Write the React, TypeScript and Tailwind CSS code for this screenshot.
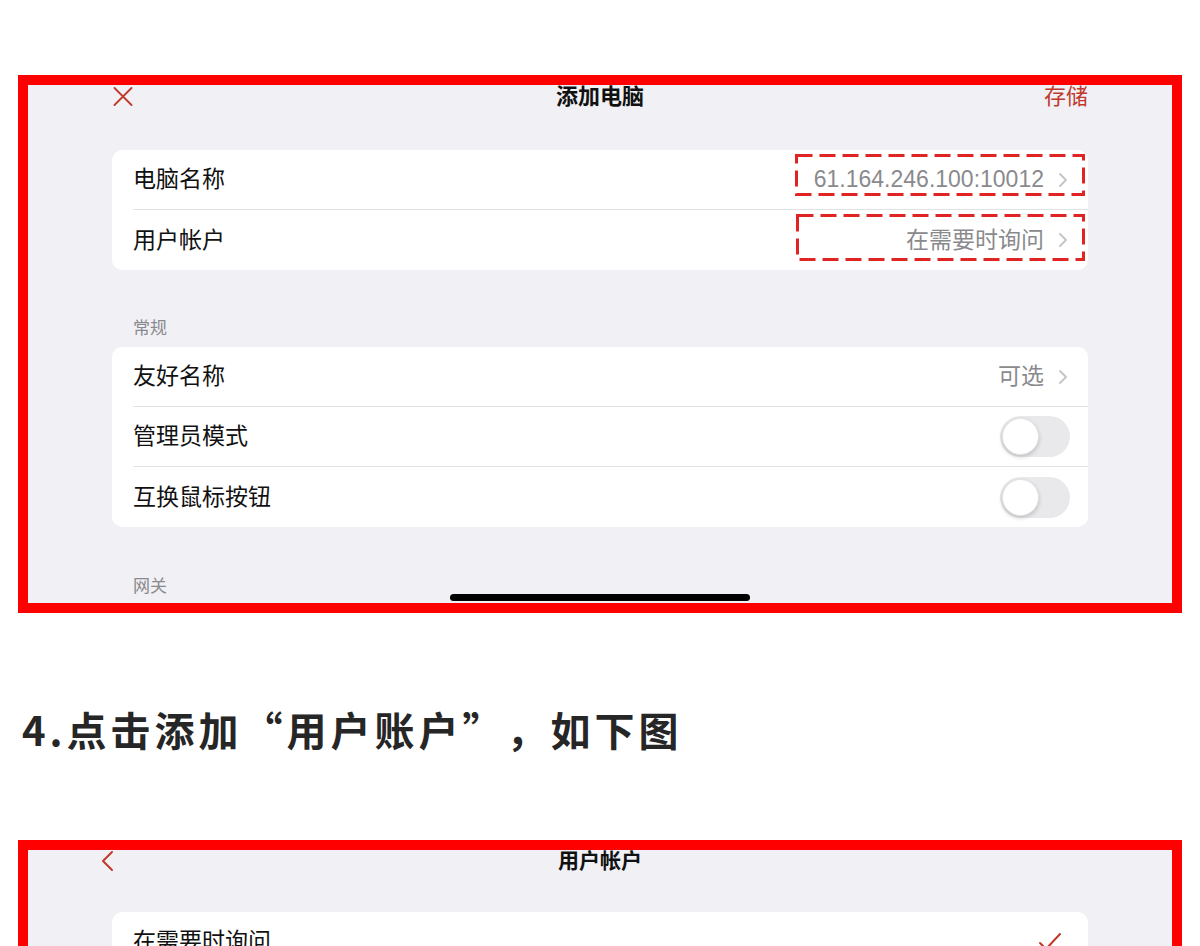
import React from 'react';

const RED = '#c0392b';

const Chevron = () => (
    <svg width="10" height="16" viewBox="0 0 10 16" className="shrink-0">
        <path d="M2 2 L8 8 L2 14" fill="none" stroke="#c4c4c8" strokeWidth="1.8" strokeLinecap="round" strokeLinejoin="round" />
    </svg>
);

const Toggle = () => (
    <div className="w-[70px] h-[41px] rounded-full bg-[#e9e9eb] p-[2px] flex items-center">
        <div className="w-[37px] h-[37px] rounded-full bg-white border border-[#e2e2e4] shadow-[0_2px_4px_rgba(0,0,0,0.18)]" />
    </div>
);

const DashedBox: React.FC<{ className: string; w: number; h: number }> = ({ className, w, h }) => (
    <svg width={w} height={h} className={`absolute pointer-events-none ${className}`}>
        <rect x="1.5" y="1.5" width={w - 3} height={h - 3} fill="none" stroke="#e02424" strokeWidth="3" strokeDasharray="16 7" />
    </svg>
);

interface RowProps {
    label: string;
    value?: string;
    chevron?: boolean;
    toggle?: boolean;
    last?: boolean;
    check?: boolean;
}

const Row: React.FC<RowProps> = ({ label, value, chevron, toggle, last, check }) => (
    <div className="h-[60px] pl-[21px] flex">
        <div className={`flex-1 flex items-center justify-between ${toggle ? 'pr-[18px]' : 'pr-[20px]'} ${last ? '' : 'border-b border-[#e3e3e6]'}`}>
            <span className="text-[23px] text-[#111]">{label}</span>
            {(value || chevron) && (
                <div className="flex items-center gap-[14px]">
                    {value && <span className="text-[23px] text-[#8a8a8e]">{value}</span>}
                    {chevron && <Chevron />}
                </div>
            )}
            {toggle && <Toggle />}
            {check && (
                <svg width="24" height="20" viewBox="0 0 24 20" className="mr-[6px]">
                    <path d="M2 11 L8 17 L22 2" fill="none" stroke={RED} strokeWidth="2" strokeLinecap="round" strokeLinejoin="round" />
                </svg>
            )}
        </div>
    </div>
);

export default function App() {
    return (
        <div className="w-[1200px] min-h-[946px] bg-white overflow-hidden font-['Liberation_Sans','Noto_Sans_CJK_SC',sans-serif]">
            <div className="h-[75px]" />

            {/* 添加电脑 screenshot */}
            <div className="mx-[18px] h-[538px] border-[10px] border-[#ff0000] bg-[#f0f0f5] relative overflow-hidden">
                <div className="h-[22px] px-[84px] flex items-center justify-between relative">
                    <svg width="20" height="19" viewBox="0 0 20 19" className="ml-[1px]">
                        <path d="M1.5 1 L18.5 18 M18.5 1 L1.5 18" stroke={RED} strokeWidth="1.8" strokeLinecap="round" />
                    </svg>
                    <span className="absolute left-0 right-0 text-center text-[22px] font-bold text-[#111]">添加电脑</span>
                    <span className="text-[22px] text-[#c0392b]">存储</span>
                </div>

                <div className="mx-[84px] mt-[43px] bg-white rounded-[10px] relative">
                    <Row label="电脑名称" value="61.164.246.100:10012" chevron />
                    <Row label="用户帐户" value="在需要时询问" chevron last />
                    <DashedBox className="left-[683px] top-[4px]" w={290} h={42} />
                    <DashedBox className="left-[684px] top-[64px]" w={289} h={47} />
                </div>

                <div className="mx-[84px] pl-[21px] mt-[49px] mb-[8px] text-[17px] leading-[20px] text-[#8a8a8e]">常规</div>
                <div className="mx-[84px] bg-white rounded-[10px]">
                    <Row label="友好名称" value="可选" chevron />
                    <Row label="管理员模式" toggle />
                    <Row label="互换鼠标按钮" toggle last />
                </div>

                <div className="mx-[84px] pl-[21px] mt-[50px] text-[17px] leading-[20px] text-[#8a8a8e]">网关</div>

                <div className="absolute left-[422px] bottom-[2px] w-[300px] h-[7px] rounded-full bg-black" />
            </div>

            <h2 className="mt-[92px] pl-[22px] h-[48px] flex items-center text-[40px] leading-[48px] font-bold tracking-[4px] [text-spacing-trim:space-all] text-[#262626] font-['Noto_Sans_CJK_SC',sans-serif]">
                4.点击添加“用户账户”，如下图
            </h2>

            {/* 用户帐户 screenshot */}
            <div className="mx-[18px] mt-[87px] h-[300px] border-[10px] border-[#ff0000] bg-[#f0f0f5] overflow-hidden">
                <div className="h-[22px] px-[72px] flex items-center relative">
                    <svg width="14" height="22" viewBox="0 0 14 22">
                        <path d="M12 2 L3 11 L12 20" fill="none" stroke={RED} strokeWidth="2" strokeLinecap="round" strokeLinejoin="round" />
                    </svg>
                    <span className="absolute left-0 right-0 text-center text-[21px] font-bold text-[#111]">用户帐户</span>
                </div>
                <div className="mx-[84px] mt-[40px] bg-white rounded-[10px]">
                    <Row label="在需要时询问" check />
                    <Row label="始终" last />
                </div>
            </div>
        </div>
    );
}
